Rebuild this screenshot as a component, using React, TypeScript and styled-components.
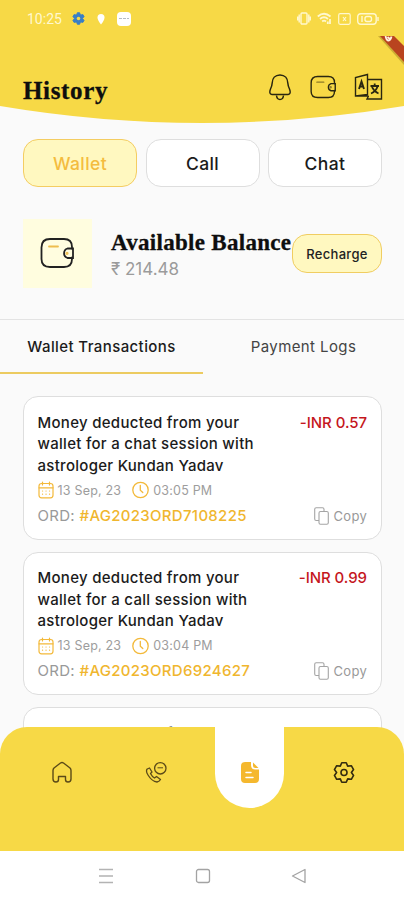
import React from "react";
import styled, { createGlobalStyle } from "styled-components";

const Global = createGlobalStyle`
  * { box-sizing: border-box; }
  body { margin: 0; background: #fafafa; }
`;

const YELLOW = "#f7d946";
const AMBER = "#f3b93a";

const Screen = styled.div`
  width: 404px;
  height: 900px;
  display: flex;
  flex-direction: column;
  overflow: hidden;
  background: #fafafa;
  color: #1b1b1b;
  font-family: Inter, "Noto Sans", sans-serif;
`;

const Header = styled.header`
  position: relative;
  flex: none;
  height: 123px;
  background: ${YELLOW};
  clip-path: path("M0 0H404V106Q202 140 0 106Z");
`;

const StatusBar = styled.div`
  height: 36px;
  padding: 1px 25px 0 27px;
  display: flex;
  align-items: center;
  justify-content: space-between;
  color: #fff8cf;
`;

const StatusGroup = styled.div<{ $gap: number }>`
  display: flex;
  align-items: center;
  gap: ${(p) => p.$gap}px;
`;

const Clock = styled.span`
  font: 400 14px/18px Roboto, sans-serif;
  letter-spacing: 0;
  margin-right: 1px;
`;

const Ribbon = styled.svg`
  position: absolute;
  top: 36px;
  right: 0;
`;

const TitleRow = styled.div`
  height: 54px;
  margin-top: 24px;
  padding: 0 21px 0 23px;
  display: flex;
  align-items: flex-start;
  justify-content: space-between;
`;

const Serif = styled.h1<{ $size: number; $track: number }>`
  margin: 0;
  font: 700 ${(p) => p.$size}px/28px "Liberation Serif", serif;
  letter-spacing: ${(p) => p.$track}px;
  color: #0e0e0e;
  -webkit-text-stroke: 0.3px #0e0e0e;
  white-space: nowrap;
`;

const HeaderTitle = styled(Serif)`
  margin-top: 17px;
`;

const HeaderIcons = styled.div`
  display: flex;
  align-items: center;
  gap: 18px;
  margin-top: 13px;
`;

const Filters = styled.div`
  display: grid;
  grid-template-columns: repeat(3, 114px);
  justify-content: space-between;
  padding: 0 22px 0 23px;
  margin-top: 16px;
`;

const Filter = styled.button<{ $active?: boolean }>`
  height: 48px;
  padding: 1px 0 0;
  border-radius: 15px;
  border: 1px solid ${(p) => (p.$active ? "#f4cd62" : "#dedede")};
  background: ${(p) => (p.$active ? "#fff8c0" : "#fff")};
  color: ${(p) => (p.$active ? "#f4bc3e" : "#1b1b1b")};
  font: 500 17.5px/24px Inter, sans-serif;
  letter-spacing: 0.4px;
`;

const Balance = styled.section`
  display: flex;
  align-items: center;
  height: 69px;
  margin-top: 32px;
  padding: 0 22px 0 23px;
`;

const WalletTile = styled.div`
  width: 69px;
  height: 69px;
  padding: 0 1px 1px 0;
  display: grid;
  place-items: center;
  background: #fffddf;
`;

const BalanceText = styled.div`
  width: 181px;
  margin: 2px 0 0 19px;
`;

const Amount = styled.div`
  font: 400 17px/22px Inter, "Noto Sans", sans-serif;
  letter-spacing: 0;
  color: #9b9b9b;
  margin-top: 1px;
`;

const Recharge = styled.button`
  flex: none;
  width: 90px;
  height: 39px;
  padding: 1px 0 0;
  border-radius: 15px;
  border: 1px solid #f0cd61;
  background: #fff8c0;
  color: #222;
  font: 500 13px/18px Inter, sans-serif;
  letter-spacing: 0.3px;
`;

const Tabs = styled.div`
  display: grid;
  grid-template-columns: 203px 1fr;
  margin-top: 31px;
  border-top: 1px solid #e3e3e3;
`;

const Tab = styled.div<{ $active?: boolean }>`
  height: 54px;
  padding-top: 1px;
  display: flex;
  align-items: center;
  justify-content: center;
  border-bottom: 2px solid ${(p) => (p.$active ? "#eccb60" : "transparent")};
  font-size: 15px;
  font-weight: ${(p) => (p.$active ? 500 : 400)};
  letter-spacing: 0.4px;
  color: ${(p) => (p.$active ? "#1b1b1b" : "#444")};
`;

const List = styled.main`
  flex: 1;
  min-height: 0;
  overflow: hidden;
  display: flex;
  flex-direction: column;
  gap: 12px;
  padding: 22px 22px 0 23px;
`;

const Card = styled.article`
  flex: none;
  height: 143.5px;
  padding: 14.5px 14px 0 13.5px;
  border: 1px solid #dedede;
  border-radius: 15px;
  background: #fff;
`;

const CardTop = styled.div`
  display: flex;
  justify-content: space-between;
  font: 500 15px/21.5px Inter, sans-serif;
`;

const Message = styled.div`
  white-space: pre-line;
  letter-spacing: 0.29px;
`;

const Debit = styled.div`
  color: #c5161d;
  white-space: nowrap;
  letter-spacing: -0.05px;
`;

const Meta = styled.div`
  display: flex;
  align-items: center;
  height: 20px;
  margin-top: 4px;
  color: #9d9d9d;
  font-size: 12.5px;
  letter-spacing: 0.2px;
  svg { margin-right: 4px; }
  span { margin-right: 11px; }
`;

const OrderRow = styled.div`
  display: flex;
  align-items: center;
  justify-content: space-between;
  height: 22px;
  margin-top: 4px;
  color: #999;
  font-size: 15px;
  letter-spacing: 0.3px;
`;

const OrderId = styled.span`
  color: #f0b62e;
  font-weight: 500;
`;

const Copy = styled.span`
  display: flex;
  align-items: center;
  gap: 4px;
  padding-top: 1px;
  font-size: 13px;
`;

const BottomNav = styled.nav`
  position: relative;
  flex: none;
  height: 124px;
  margin-top: -27px;
  padding: 0 14px;
  display: grid;
  grid-template-columns: repeat(4, 94px);
  justify-items: center;
  background: ${YELLOW};
  border-radius: 27px 27px 0 0;
`;

const NavItem = styled.div<{ $active?: boolean }>`
  width: 69px;
  height: ${(p) => (p.$active ? 81 : 90)}px;
  padding: 34px 0 0 1px;
  display: flex;
  align-items: flex-start;
  justify-content: center;
  background: ${(p) => (p.$active ? "#fff" : "transparent")};
  border-radius: 0 0 35px 35px;
`;

const SystemBar = styled.footer`
  flex: none;
  height: 49px;
  padding: 0 97px 0 98px;
  display: flex;
  align-items: center;
  justify-content: space-between;
  background: #fff;
`;

const WalletIcon = ({ w, h, accent, dark }: { w: number; h: number; accent: string; dark: string }) => (
  <svg width={w} height={h} viewBox="0 0 34 32" preserveAspectRatio="none" fill="none" stroke={dark} strokeWidth="1.8" strokeLinecap="round">
    <path d="M32 11.500V10Q32 2 24 2H10Q1.500 2 1.500 10.500V22Q1.500 30 10 30H24Q32 30 32 22V20.500" />
    <path d="M33 11.500H27.500A5 5 0 0 0 27.500 21H33Z" />
    <path d="M9 9.500H18" stroke={accent} />
    <circle cx="27" cy="16.300" r=".7" stroke={accent} />
  </svg>
);

const BellIcon = () => (
  <svg width="24" height="28" viewBox="0 0 24 28" fill="none" stroke="#2a2710" strokeWidth="1.5" strokeLinejoin="round">
    <path d="M12 2C7 2 4.300 5.500 4.200 10Q4 13 2.500 16Q.5 21 4 21.500H20Q23.500 21 21.500 16Q20 13 19.800 10C19.700 5.500 17 2 12 2Z" />
    <path d="M8.500 22.500Q9 26.500 12 26.500T15.500 22.500" />
  </svg>
);

const TranslateIcon = () => (
  <svg width="29" height="28" viewBox="0 0 29 28" fill="none" stroke="#2a2710" strokeWidth="1.4">
    <path d="M14.500 23H1.500V4.500L13.500 1.500V21.500L1.500 23" />
    <path d="M14 6.500H27.500V26H13L14.500 23" />
    <path d="M5 16L7.500 8.500L10 16M6 13.500H9.300" strokeWidth="1.900" />
    <path d="M16.500 13H25M20.700 10.500V13M23.500 13.500Q22 18.500 17 20.500M18 14Q20 18.500 24.500 20.500" strokeWidth="1.800" />
  </svg>
);

const CalendarIcon = () => (
  <svg width="16" height="18" viewBox="0 0 16 18" fill="none" stroke={AMBER} strokeWidth="1.200" strokeLinecap="round">
    <rect x="1" y="2.500" width="14" height="14.300" rx="2.500" />
    <path d="M1 6.800H15M4.500 1V4M11.500 1V4" />
    <path d="M4.500 10H4.600M8 10H8.100M11.500 10H11.600M4.500 13.200H4.600M8 13.200H8.100M11.500 13.200H11.600" />
  </svg>
);

const ClockIcon = () => (
  <svg width="17" height="18" viewBox="0 0 17 18" fill="none" stroke={AMBER} strokeWidth="1.300" strokeLinecap="round">
    <circle cx="8.500" cy="9" r="7.700" />
    <path d="M8.300 4.500V9.200L10.800 11.500" />
  </svg>
);

const CopyIcon = () => (
  <svg width="15" height="18" viewBox="0 0 15 18" fill="none" stroke="#a5a5a5" strokeWidth="1.100">
    <rect x="5" y="4.500" width="9.300" height="12.800" rx="1.500" />
    <path d="M5 13.500H2.200Q.7 13.500 .7 12V2.200Q.7 .7 2.200 .7H8.500Q10 .7 10 2.200V4.500" />
  </svg>
);

const gearPath = (outer: number, inner: number, spread: number) => {
  const points: string[] = [];
  for (let i = 0; i < 6; i++) {
    [[-spread, outer], [spread, outer], [30, inner]].forEach(([offset, r]) => {
      const a = ((i * 60 - 90 + offset) * Math.PI) / 180;
      points.push(`${(11 + r * Math.cos(a)).toFixed(2)} ${(11 + r * Math.sin(a)).toFixed(2)}`);
    });
  }
  return `M${points.join("L")}Z`;
};

const transactions = [
  { message: "Money deducted from your\nwallet for a chat session with\nastrologer Kundan Yadav", amount: "-INR 0.57", time: "03:05 PM", order: "#AG2023ORD7108225" },
  { message: "Money deducted from your\nwallet for a call session with\nastrologer Kundan Yadav", amount: "-INR 0.99", time: "03:04 PM", order: "#AG2023ORD6924627" },
];

export default function App() {
  return (
    <Screen>
      <Global />
      <Header>
        <StatusBar>
          <StatusGroup $gap={9}>
            <Clock>10:25</Clock>
            <svg width="13" height="13" viewBox="0 0 22 22">
              <path d={gearPath(10, 6.8, 11)} fill="#397fc6" stroke="#397fc6" strokeWidth="1.500" strokeLinejoin="round" />
              <circle cx="11" cy="11" r="3" fill={YELLOW} />
            </svg>
            <svg width="14" height="12" viewBox="0 0 14 12">
              <path d="M7 11.500Q3.500 7 3.500 4.500A3.500 3.500 0 0 1 10.500 4.500Q10.500 7 7 11.500Z" fill="#fff" />
            </svg>
            <svg width="14" height="14" viewBox="0 0 14 14">
              <rect width="14" height="14" rx="4" fill="#fff" />
              <path d="M2 6.500H12" stroke="#b5bcc4" strokeDasharray="3 1" />
            </svg>
          </StatusGroup>
          <StatusGroup $gap={6}>
            <svg width="14" height="13" viewBox="0 0 14 13" fill="none" stroke="currentColor" strokeWidth="1.400">
              <rect x="4" y="1" width="6" height="11" rx="1" />
              <path d="M2.200 2.500V10.500M.7 4.500V8.500M11.800 2.500V10.500M13.300 4.500V8.500" />
            </svg>
            <svg width="15" height="13" viewBox="0 0 15 13" fill="none" stroke="currentColor" strokeWidth="1.800">
              <path d="M.8 4.500Q7 -1 13.500 4.500M3 7Q7 3.500 11 7M5.200 9.500Q7 7.800 9 9.500M13 7V12M10.800 9.500V12" />
            </svg>
            <svg width="13" height="12" viewBox="0 0 13 12" fill="none" stroke="currentColor" strokeWidth="1.200">
              <rect x=".7" y=".7" width="11.500" height="10.600" rx="1.500" />
              <path d="M5 4L8 8M8 4L5 8" />
            </svg>
            <svg width="22" height="12" viewBox="0 0 22 12" fill="none" stroke="currentColor" strokeWidth="1.400">
              <rect x=".7" y=".7" width="18.500" height="10.600" rx="3" />
              <path d="M21 4V8M5 3V9" />
              <rect x="8" y="3.500" width="6.500" height="5" rx="2" />
            </svg>
          </StatusGroup>
        </StatusBar>
        <TitleRow>
          <HeaderTitle $size={25} $track={0.65}>History</HeaderTitle>
          <HeaderIcons>
            <BellIcon />
            <WalletIcon w={26} h={24} accent="#8d7b27" dark="#2a2710" />
            <TranslateIcon />
          </HeaderIcons>
        </TitleRow>
        <Ribbon width="28" height="32" viewBox="0 0 28 32">
          <path d="M2 0L28 29V24L8 0Z" fill="#9a7a1e" opacity=".45" />
          <path d="M4 0H18L28 10V26Z" fill="#b9441f" />
          <path d="M9.500 0Q10.500 4.500 12.500 4.500Q14.800 4 15.500 .5M11.500 1L14 3" fill="none" stroke="#fff0df" strokeWidth="1.800" />
        </Ribbon>
      </Header>
      <Filters>
        <Filter $active>Wallet</Filter>
        <Filter>Call</Filter>
        <Filter>Chat</Filter>
      </Filters>
      <Balance>
        <WalletTile>
          <WalletIcon w={34} h={32} accent="#eebd4e" dark="#222" />
        </WalletTile>
        <BalanceText>
          <Serif as="h2" $size={23} $track={0.3}>Available Balance</Serif>
          <Amount>₹ 214.48</Amount>
        </BalanceText>
        <Recharge>Recharge</Recharge>
      </Balance>
      <Tabs>
        <Tab $active>Wallet Transactions</Tab>
        <Tab>Payment Logs</Tab>
      </Tabs>
      <List>
        {transactions.map((t) => (
          <Card key={t.order}>
            <CardTop>
              <Message>{t.message}</Message>
              <Debit>{t.amount}</Debit>
            </CardTop>
            <Meta>
              <CalendarIcon />
              <span>13 Sep, 23</span>
              <ClockIcon />
              <span>{t.time}</span>
            </Meta>
            <OrderRow>
              <span>ORD: <OrderId>{t.order}</OrderId></span>
              <Copy><CopyIcon />Copy</Copy>
            </OrderRow>
          </Card>
        ))}
        <Card>
          <CardTop>
            <Message>Money deducted from your</Message>
            <Debit>-INR 0.99</Debit>
          </CardTop>
        </Card>
      </List>
      <BottomNav>
        <NavItem>
          <svg width="22" height="23" viewBox="0 0 22 23" fill="none" stroke="#5b4a18" strokeWidth="1.400" strokeLinejoin="round">
            <path d="M2 9.500Q2 8 3 7L9.500 2Q11 1 12.500 2L19 7Q20 8 20 9.500V18Q20 21 17 21Q14.500 21 14.500 18.500V15.500H7.500V18.500Q7.500 21 5 21Q2 21 2 18Z" />
          </svg>
        </NavItem>
        <NavItem>
          <svg width="22" height="23" viewBox="0 0 22 23" fill="none" stroke="#5b4a18" strokeWidth="1.300" strokeLinejoin="round">
            <path d="M2.200 8Q.5 10 3 14Q7 20.500 12 21Q14.500 20.500 15.500 18.500L11.500 15.500L9.500 17Q7 15.500 5.500 12.500L7 11L4.500 7Z" />
            <circle cx="15.300" cy="7.300" r="5.700" />
            <path d="M12.500 6.800H18" strokeWidth="1" />
          </svg>
        </NavItem>
        <NavItem $active>
          <svg width="20" height="23" viewBox="0 0 20 23">
            <path d="M5 1H11V4Q11 8.500 15.500 8.500H19V18Q19 22 15 22H5Q1 22 1 18V5Q1 1 5 1Z" fill="#f5b82e" />
            <path d="M13 1.500L18.500 7H15.500Q13 7 13 4.500Z" fill="#f5b82e" />
            <path d="M6 11.500H11M6 16.500H13" stroke="#fff" strokeWidth="1.500" strokeLinecap="round" />
          </svg>
        </NavItem>
        <NavItem>
          <svg width="22" height="23" viewBox="0 -.5 22 23" fill="none" stroke="#332b10" strokeWidth="1.600" strokeLinejoin="round">
            <path d={gearPath(10, 7.4, 13)} />
            <circle cx="11" cy="11" r="3" />
          </svg>
        </NavItem>
      </BottomNav>
      <SystemBar>
        <svg width="16" height="16" viewBox="0 0 16 16" stroke="#b3b3b3" strokeWidth="1.500">
          <path d="M1 1.500H15M1 8H15M1 14.500H15" />
        </svg>
        <svg width="16" height="16" viewBox="0 0 16 16" fill="none" stroke="#a3a3a3" strokeWidth="1.300">
          <rect x="1.500" y="1.500" width="13" height="13" rx="2" />
        </svg>
        <svg width="16" height="16" viewBox="0 0 16 16" fill="none" stroke="#a3a3a3" strokeWidth="1.300" strokeLinejoin="round">
          <path d="M1.500 8L14 1.500V14.500Z" />
        </svg>
      </SystemBar>
    </Screen>
  );
}
